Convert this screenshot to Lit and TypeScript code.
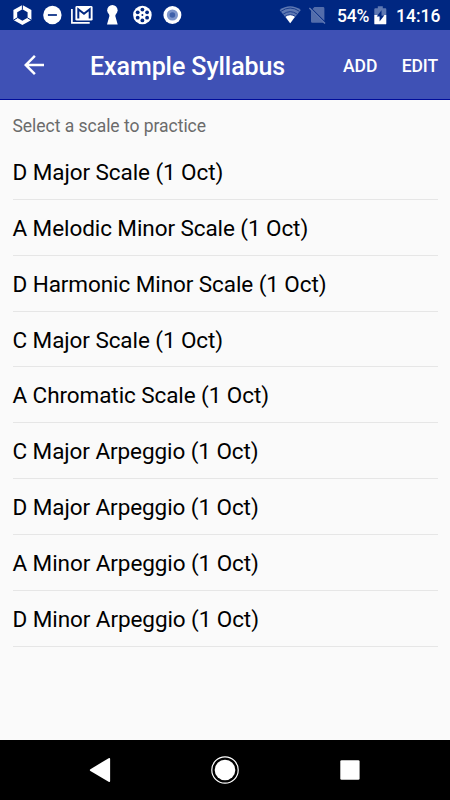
import { LitElement, html, css, svg } from "lit";
import { customElement, property } from "lit/decorators.js";

// Notification glyphs, each centred in a 30x30 slot.
const notifications = [
  svg`<path d="M15 5l9 5v10l-9 5-9-5V10z" fill="#fff"/>
      <path d="M15 9.300l5.200 3v5.400l-5.200 3-5.200-3v-5.400z" fill="#002781"/>
      <path d="M15 4.500v5M10 17.800l-4.500 2.700M20 17.800l4.500 2.700" stroke="#002781" stroke-width="1"/>`,
  svg`<circle cx="15" cy="15" r="9.2" fill="#fff"/><path d="M10.5 15h9" stroke="#002781" stroke-width="1.7"/>`,
  svg`<rect x="8" y="6" width="17.2" height="14.6" rx="1.4" fill="#fff"/>
      <path d="M4.500 9v13.8h17.8" fill="none" stroke="#fff" stroke-width="1.7"/>
      <path d="M10.900 18.6V9.2l5.7 4.5 5.7-4.5v9.4" fill="none" stroke="#002781" stroke-width="2"/>`,
  svg`<circle cx="15" cy="10.2" r="5.2" fill="#fff"/><path d="M11.5 13h7l-.6 3 2.4 8.6H9.6L12 16z" fill="#fff"/>`,
  svg`<circle cx="15" cy="15" r="9.3" fill="#fff"/>
      <g fill="#002781"><circle cx="15" cy="9.6" r="1.9"/><circle cx="19.7" cy="12.3" r="1.9"/><circle cx="19.7" cy="17.7" r="1.9"/><circle cx="15" cy="20.4" r="1.9"/><circle cx="10.3" cy="17.7" r="1.9"/><circle cx="10.3" cy="12.3" r="1.9"/><circle cx="15" cy="15" r="1"/></g>`,
  svg`<circle cx="15" cy="15" r="9" fill="#fff"/><circle cx="15" cy="15" r="5.6" fill="#7d95cb"/><circle cx="15" cy="15" r="2.8" fill="#3f60aa"/>`,
];

@customElement("status-bar")
export class StatusBar extends LitElement {
  static styles = css`
    :host { display: flex; height: 30px; background: #002781; color: #fff; box-sizing: border-box; padding-left: 7px; }
    svg { display: block; flex: none; }
    .space { flex: 1; }
    .text { font: 500 17.5px/32px Roboto, sans-serif; white-space: nowrap; }
    .percent { width: 37px; letter-spacing: -0.2px; }
    .time { width: 54px; }
  `;
  render() {
    return html`
      ${notifications.map((icon) => html`<svg width="30" height="30" viewBox="-0.4 0 30 30">${icon}</svg>`)}
      <div class="space"></div>
      <svg width="60" height="30" viewBox="277 0 60 30">
        <path d="M279.6 9.9Q290.2 2.4 300.8 9.9L290.2 23.3z" fill="#5f79b3"/>
        <path d="M285.3 16.4Q290.2 13.2 295.1 16.4L290.2 23.3z" fill="#fff"/>
        <path d="M281 11.3Q290.2 4.8 299.4 11.3M283.2 14.1Q290.2 9.2 297.2 14.1M285 16.5Q290.2 12.9 295.4 16.5" fill="none" stroke="#1c3d8e" stroke-width="1"/>
        <path d="M314.4 7H323q1.4 0 1.4 1.4v12.4L312.5 8.9zM311 10.5L323.5 22.8H312.4q-1.4 0-1.4-1.4z" fill="#536dab"/>
        <path d="M309.4 7.9L325 23.5" stroke="#637cb5" stroke-width="1.4"/>
      </svg>
      <div class="text percent">54%</div>
      <svg width="22" height="30" viewBox="374 0 22 30">
        <path d="M375.3 8.3h2.5V6.2h5v2.1h2.6q.9 0 .9.9V15h-12V9.2q0-.9 1-.9z" fill="#5e78b2"/>
        <path d="M374.3 15h12v8.4q0 .9-.9.9h-10.1q-1 0-1-.9z" fill="#fff"/>
        <path d="M381.5 10.2l-4.800 6.400h2.900v5l4.800-6.400h-2.900z" fill="#002781"/>
      </svg>
      <div class="text time">14:16</div>
    `;
  }
}

@customElement("app-bar")
export class AppBar extends LitElement {
  @property() heading = "";
  static styles = css`
    :host { display: flex; align-items: center; height: 70px; box-sizing: border-box; padding: 0 12px 0 19px; border-bottom: 1px solid #000c9a; background: #3f51b5; color: #fff; font-family: Roboto, sans-serif; font-weight: 500; white-space: nowrap; }
    svg { display: block; width: 30px; height: 30px; margin-right: 41px; }
    .title { flex: 1; font-size: 25px; line-height: 30px; padding-top: 4px; letter-spacing: -0.08px; }
    .action { font-size: 17.5px; line-height: 22px; padding-top: 2px; margin-left: 24.5px; letter-spacing: -0.1px; }
  `;
  render() {
    return html`
      <svg viewBox="0 0 24 24"><path fill="#fff" d="M20 11H7.83l5.59-5.59L12 4l-8 8 8 8 1.41-1.41L7.83 13H20z"/></svg>
      <div class="title">${this.heading}</div>
      <div class="action">ADD</div>
      <div class="action">EDIT</div>
    `;
  }
}

@customElement("nav-bar")
export class NavBar extends LitElement {
  static styles = css`
    :host { display: flex; justify-content: center; height: 60px; background: #000; }
    svg { display: block; width: 125px; height: 60px; }
  `;
  render() {
    return html`
      <svg viewBox="0 0 125 60"><path d="M52.4 29.2L70.6 18.2q1.5-.7 1.5.8v22q0 1.5-1.5.8L52.4 31q-1.3-.9 0-1.8z" fill="#fff"/></svg>
      <svg viewBox="0 0 125 60"><circle cx="62" cy="30" r="10.3" fill="#fff"/><circle cx="62" cy="30" r="13.2" fill="none" stroke="#fff" stroke-width="1.2"/></svg>
      <svg viewBox="0 0 125 60"><rect x="52.3" y="20.2" width="19.3" height="19.5" rx="1.3" fill="#fff"/></svg>
    `;
  }
}

@customElement("app-root")
export class AppRoot extends LitElement {
  private scales = [
    "D Major Scale (1 Oct)",
    "A Melodic Minor Scale (1 Oct)",
    "D Harmonic Minor Scale (1 Oct)",
    "C Major Scale (1 Oct)",
    "A Chromatic Scale (1 Oct)",
    "C Major Arpeggio (1 Oct)",
    "D Major Arpeggio (1 Oct)",
    "A Minor Arpeggio (1 Oct)",
    "D Minor Arpeggio (1 Oct)",
  ];
  static styles = css`
    :host { display: flex; flex-direction: column; height: 800px; background: #fafafa; font-family: Roboto, sans-serif; overflow: hidden; }
    main { flex: 1; padding: 12.5px 12.5px 0; }
    .hint { height: 31.4px; font-size: 17.5px; line-height: 26px; color: #6b6b6b; letter-spacing: -0.03px; }
    .row { height: 55.875px; box-sizing: border-box; border-bottom: 1px solid #e6e6e6; font-size: 22.5px; line-height: 57.4px; color: #000; white-space: nowrap; letter-spacing: -0.08px; }
  `;
  render() {
    return html`
      <status-bar></status-bar>
      <app-bar heading="Example Syllabus"></app-bar>
      <main>
        <div class="hint">Select a scale to practice</div>
        ${this.scales.map((name) => html`<div class="row">${name}</div>`)}
      </main>
      <nav-bar></nav-bar>
    `;
  }
}
